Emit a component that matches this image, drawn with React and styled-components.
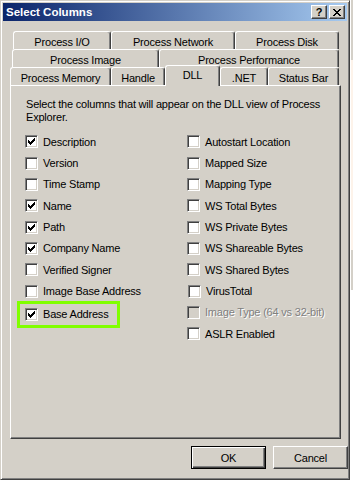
import React from 'react'
import styled, { createGlobalStyle } from 'styled-components'

const GlobalStyle = createGlobalStyle`
  html, body {
    margin: 0;
    padding: 0;
    background: #ffffff;
  }
  body {
    font-family: 'Liberation Sans', Arial, sans-serif;
    font-size: 11px;
    letter-spacing: -0.2px;
    color: #000000;
  }
  * {
    box-sizing: border-box;
  }
`

const FACE = '#d4d0c8'

const Page = styled.div`
  display: flex;
  width: 353px;
  height: 481px;
  overflow: hidden;
`

const Window = styled.div`
  width: 350px;
  height: 480px;
  flex: none;
  background: ${FACE};
  border: 1px solid;
  border-color: ${FACE} #404040 #404040 ${FACE};
  box-shadow: inset 1px 1px #ffffff, inset -1px -1px #808080;
  padding: 2px;
  display: flex;
  flex-direction: column;
`

const TitleBar = styled.div`
  height: 18px;
  display: flex;
  align-items: center;
  padding: 0 2px 0 3px;
  background: linear-gradient(to right, #0a246a, #a6caf0);
`

const Title = styled.div`
  flex: 1;
  color: #ffffff;
  font-weight: bold;
  font-size: 11.5px;
  letter-spacing: 0;
`

const CaptionButton = styled.div`
  width: 16px;
  height: 14px;
  margin-left: 2px;
  background: ${FACE};
  border: 1px solid;
  border-color: #ffffff #404040 #404040 #ffffff;
  box-shadow: inset -1px -1px #808080;
  display: flex;
  align-items: center;
  justify-content: center;
  font-weight: bold;
  font-size: 11px;
  line-height: 1;
`

const Body = styled.div`
  display: flex;
  flex-direction: column;
  padding: 10px 0 0 7px;
`

const TabRow = styled.div`
  display: flex;
  height: 18px;
  margin-left: ${p => p.indent}px;
`

const Tab = styled.div`
  width: ${p => p.w}px;
  height: ${p => (p.active ? 21 : 18)}px;
  margin-top: ${p => (p.active ? -2 : 0)}px;
  position: relative;
  z-index: ${p => (p.active ? 2 : 1)};
  flex: none;
  display: flex;
  align-items: flex-start;
  justify-content: center;
  padding-top: ${p => (p.active ? 3 : 4)}px;
  background: ${FACE};
  border-top: 1px solid #ffffff;
  border-left: 1px solid #ffffff;
  border-right: 1px solid #404040;
  border-radius: 3px 3px 0 0;
  box-shadow: inset -1px 0 #808080;
  white-space: nowrap;
`

const Panel = styled.div`
  width: 331px;
  height: 354px;
  border: 1px solid;
  border-color: #ffffff #404040 #404040 #ffffff;
  box-shadow: inset -1px -1px #808080;
  padding: 12px 0 0 15px;
`

const Intro = styled.p`
  margin: 0;
  line-height: 13px;
  width: 310px;
`

const Columns = styled.div`
  display: grid;
  grid-template-columns: 162px 1fr;
  margin-top: 7px;
  margin-left: -1px;
`

const Column = styled.div`
  display: flex;
  flex-direction: column;
`

const Row = styled.div`
  height: 21.35px;
  display: flex;
  align-items: center;
  gap: 5px;
  padding-left: ${p => p.nudge || 0}px;
  color: ${p => (p.disabled ? '#808080' : '#000000')};
  text-shadow: ${p => (p.disabled ? '1px 1px #ffffff' : 'none')};
  white-space: nowrap;
`

const HighlightRow = styled(Row)`
  width: 103px;
  height: 27px;
  margin: -1px 0 0 -8px;
  padding-left: 5px;
  border: 3px solid #80ff00;
`

const Box = styled.div`
  width: 13px;
  height: 13px;
  flex: none;
  background: ${p => (p.disabled ? FACE : '#ffffff')};
  border: 1px solid;
  border-color: #808080 #ffffff #ffffff #808080;
  box-shadow: inset 1px 1px #404040, inset -1px -1px ${FACE};
  display: flex;
  align-items: center;
  justify-content: center;
`

const ButtonBar = styled.div`
  display: flex;
  justify-content: flex-end;
  gap: 7px;
  width: 338px;
  margin-top: 7px;
`

const Button = styled.div`
  width: 75px;
  height: 23px;
  display: flex;
  align-items: center;
  justify-content: center;
  background: ${FACE};
  border: 1px solid;
  border-color: ${p => (p.primary ? '#000000' : '#ffffff #404040 #404040 #ffffff')};
  box-shadow: ${p =>
    p.primary
      ? 'inset 1px 1px #ffffff, inset -1px -1px #404040, inset -2px -2px #808080'
      : 'inset -1px -1px #808080'};
`

const Backdrop = styled.div`
  flex: 1;
  display: flex;
  flex-direction: column;
  border-left: 1px solid #ffffff;
`

const Strip = styled.div`
  height: ${p => p.h}px;
  flex: ${p => (p.h ? 'none' : 1)};
  background: ${p => p.bg};
`

const Check = () => (
  <svg width='7' height='7' viewBox='0 0 7 7' shapeRendering='crispEdges'>
    <path
      d='M0 2h1v3H0zM1 3h1v3H1zM2 4h1v3H2zM3 3h1v3H3zM4 2h1v3H4zM5 1h1v3H5zM6 0h1v3H6z'
      fill='#000000'
    />
  </svg>
)

const leftItems = [
  { label: 'Description', checked: true },
  { label: 'Version' },
  { label: 'Time Stamp' },
  { label: 'Name', checked: true },
  { label: 'Path', checked: true },
  { label: 'Company Name', checked: true },
  { label: 'Verified Signer' },
  { label: 'Image Base Address' },
  { label: 'Base Address', checked: true, highlight: true }
]

const rightItems = [
  { label: 'Autostart Location' },
  { label: 'Mapped Size' },
  { label: 'Mapping Type' },
  { label: 'WS Total Bytes' },
  { label: 'WS Private Bytes' },
  { label: 'WS Shareable Bytes' },
  { label: 'WS Shared Bytes' },
  { label: 'VirusTotal', nudge: 1 },
  { label: 'Image Type (64 vs 32-bit)', disabled: true },
  { label: 'ASLR Enabled' }
]

const Item = ({ label, checked, disabled, highlight, nudge }) => {
  const Wrap = highlight ? HighlightRow : Row
  return (
    <Wrap disabled={disabled} nudge={nudge}>
      <Box disabled={disabled}>{checked && <Check />}</Box>
      <span>{label}</span>
    </Wrap>
  )
}

const App = () => {
  return (
    <Page>
      <GlobalStyle />
      <Window>
        <TitleBar>
          <Title>Select Columns</Title>
          <CaptionButton>?</CaptionButton>
          <CaptionButton>
            <svg width='8' height='7' viewBox='0 0 8 7' shapeRendering='crispEdges'>
              <path
                d='M0 0h2v1H0zM6 0h2v1H6zM1 1h2v1H1zM5 1h2v1H5zM2 2h4v1H2zM3 3h2v1H3zM2 4h4v1H2zM1 5h2v1H1zM5 5h2v1H5zM0 6h2v1H0zM6 6h2v1H6z'
                fill='#000000'
              />
            </svg>
          </CaptionButton>
        </TitleBar>
        <Body>
          <TabRow indent={3}>
            <Tab w={98}>Process I/O</Tab>
            <Tab w={124}>Process Network</Tab>
            <Tab w={104}>Process Disk</Tab>
          </TabRow>
          <TabRow indent={2}>
            <Tab w={147}>Process Image</Tab>
            <Tab w={180}>Process Performance</Tab>
          </TabRow>
          <TabRow indent={0}>
            <Tab w={101}>Process Memory</Tab>
            <Tab w={54}>Handle</Tab>
            <Tab w={55} active>
              DLL
            </Tab>
            <Tab w={48}>.NET</Tab>
            <Tab w={71}>Status Bar</Tab>
          </TabRow>
          <Panel>
            <Intro>
              Select the columns that will appear on the DLL view of Process
              Explorer.
            </Intro>
            <Columns>
              <Column>
                {leftItems.map(item => (
                  <Item key={item.label} {...item} />
                ))}
              </Column>
              <Column>
                {rightItems.map(item => (
                  <Item key={item.label} {...item} />
                ))}
              </Column>
            </Columns>
          </Panel>
          <ButtonBar>
            <Button primary>OK</Button>
            <Button>Cancel</Button>
          </ButtonBar>
        </Body>
      </Window>
      <Backdrop>
        <Strip h={60} bg={FACE} />
        <Strip h={190} bg='#fdf3ea' />
        <Strip h={40} bg={FACE} />
        <Strip bg='#ffffff' />
      </Backdrop>
    </Page>
  )
}

export default App
